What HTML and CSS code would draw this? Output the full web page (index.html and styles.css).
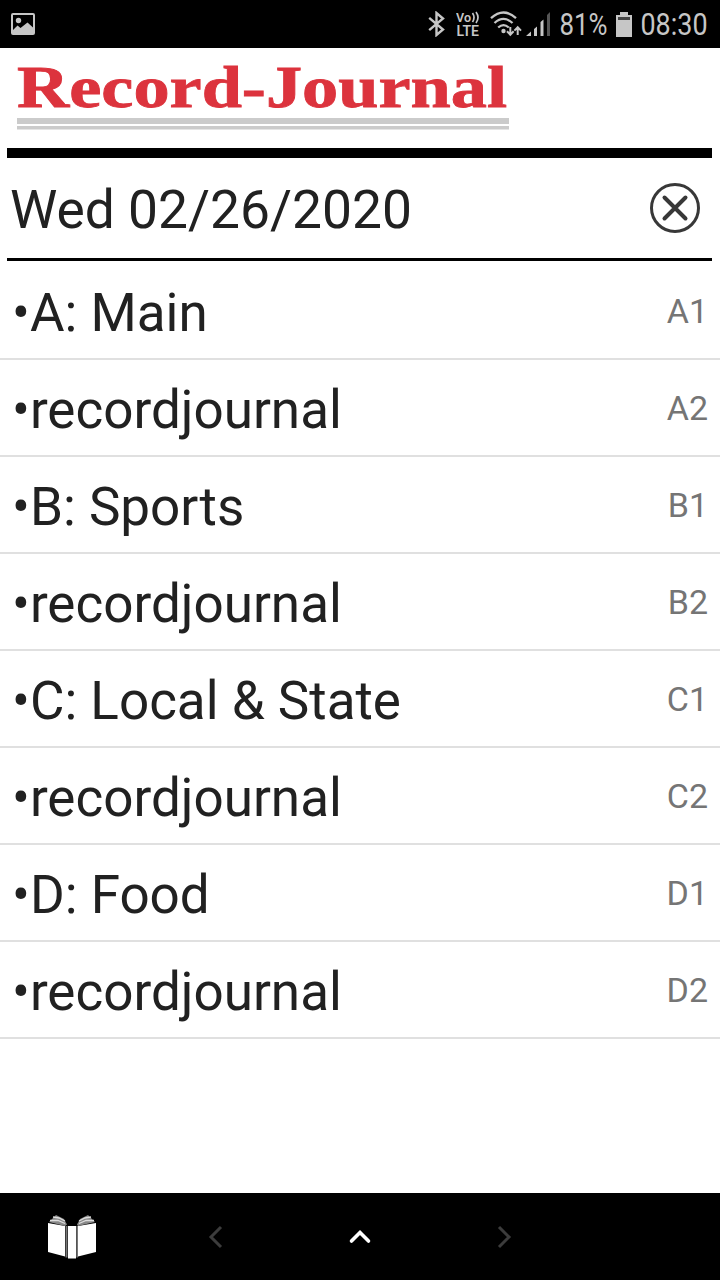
FILE: index.html
```html
<!DOCTYPE html>
<html lang="en">
<head>
    <meta charset="UTF-8">
    <meta name="viewport" content="width=device-width, initial-scale=1.0">
    <title>Record-Journal</title>
    <link rel="stylesheet" href="styles.css">
</head>
<body>
    <div class="status-bar">
        <svg class="icon-photo" width="24" height="22" viewBox="0 0 24 22">
            <path fill="#c6c6c6" fill-rule="evenodd" d="M2 0H22Q24 0 24 2V20Q24 22 22 22H2Q0 22 0 20V2Q0 0 2 0ZM2 2V17L6.500 12.500L9.500 15L16.500 9.500L22 14.500V2Z"/>
            <circle cx="7.500" cy="7.500" r="2.700" fill="#c6c6c6"/>
        </svg>
        <svg width="17" height="26" viewBox="0 0 17 26">
            <path fill="none" stroke="#c6c6c6" stroke-width="2.400" d="M1.200 6.800L15 18.500L8.500 24V2L15 7.500L1.200 19.200"/>
        </svg>
        <svg class="icon-volte" width="24" height="26" viewBox="0 0 24 26">
            <text x="0" y="11" font-size="13" textLength="15" lengthAdjust="spacingAndGlyphs">Vo</text>
            <path fill="none" stroke="#c6c6c6" stroke-width="1.700" d="M16.500 2Q19.500 6.500 16.500 11M20 1Q24 6.500 20 12"/>
            <text x="0.500" y="24.500" font-size="14" textLength="22.500" lengthAdjust="spacingAndGlyphs">LTE</text>
        </svg>
        <svg class="icon-wifi" width="32" height="26" viewBox="0 0 32 26">
            <g fill="none" stroke="#c6c6c6" stroke-width="2.300">
                <path d="M1 7.200Q13.500 -4.200 26 7.200M4.500 12Q13.500 3.800 22.500 12M8.200 16.500Q13.500 11.800 18.800 16.500"/>
                <path stroke-width="2" d="M20.300 16V24M17 20.300L20.300 23.700L23.600 20.300M27.700 24V16.300M24.400 19.600L27.700 16.200L31 19.600"/>
            </g>
            <circle cx="13.500" cy="20" r="2.200" fill="#c6c6c6"/>
        </svg>
        <svg class="icon-signal" width="24" height="24" viewBox="0 0 24 24">
            <path fill="#c6c6c6" d="M0 24L5 19.500V24ZM8 17L11 14.500V24H8ZM14.500 10L17.500 7.500V24H14.500Z"/>
            <path fill="#555" d="M21 3L24 0V24H21Z"/>
        </svg>
        <svg class="battery-level" width="49" height="40" viewBox="0 0 49 40">
            <text x="0.500" y="31" font-size="31" textLength="48" lengthAdjust="spacingAndGlyphs">81%</text>
        </svg>
        <svg class="icon-battery" width="16" height="25" viewBox="0 0 16 25">
            <path fill="#c6c6c6" d="M4 0H12V3H16V25H0V3H4Z"/>
            <path fill="#444" d="M2 5H14V8H2Z"/>
        </svg>
        <svg class="clock" width="68" height="40" viewBox="0 0 68 40">
            <text x="0.500" y="31" font-size="31" textLength="67" lengthAdjust="spacingAndGlyphs">08:30</text>
        </svg>
    </div>

    <header class="masthead">
        <svg class="logo" width="494" height="82" viewBox="0 -10 494 82">
            <text class="logo-text" x="1" y="48.500" font-size="59" textLength="490" lengthAdjust="spacingAndGlyphs">Record-Journal</text>
            <path fill="#cbcbcb" d="M1 60H493V66H1ZM1 68H493V71.500H1Z"/>
        </svg>
    </header>

    <div class="date-bar">
        <h1 class="date">Wed 02/26/2020</h1>
        <svg class="close" width="50" height="50" viewBox="0 0 50 50">
            <g fill="none" stroke="#383838">
                <circle cx="25" cy="25" r="23.500" stroke-width="3"/>
                <path stroke-width="4" stroke-linecap="round" d="M14.500 14.500L35.500 35.500M35.500 14.500L14.500 35.500"/>
            </g>
        </svg>
    </div>

    <ul class="sections">
        <li><span class="name">•A: Main</span><span class="page">A1</span></li>
        <li><span class="name">•recordjournal</span><span class="page">A2</span></li>
        <li><span class="name">•B: Sports</span><span class="page">B1</span></li>
        <li><span class="name">•recordjournal</span><span class="page">B2</span></li>
        <li><span class="name">•C: Local &amp; State</span><span class="page">C1</span></li>
        <li><span class="name">•recordjournal</span><span class="page">C2</span></li>
        <li><span class="name">•D: Food</span><span class="page">D1</span></li>
        <li><span class="name">•recordjournal</span><span class="page">D2</span></li>
    </ul>

    <nav class="bottom-nav">
        <div class="nav-item">
            <svg width="50" height="46" viewBox="0 0 50 46">
                <path fill="#fff" d="M1 9L18 12V42.500L1 38ZM49 9L31 12V42.500L49 38ZM21 12H29V44.500H21Z"/>
                <path fill="#777" d="M18.500 12H20.500V43.500H18.500ZM29.300 12H31V43.500H29.300Z"/>
                <path fill="#888" d="M2 8L9 1L17 5L20 10.500L18 12ZM48 8L41 1L33 5L30 10.500L31 12Z"/>
                <g fill="none" stroke="#ddd" stroke-width="1.300">
                    <path d="M3 6.500L11 6.500L18 9.500M6 3L12 4L18 7"/>
                    <path d="M47 6.500L39 6.500L32 9.500M44 3L38 4L32 7"/>
                </g>
            </svg>
        </div>
        <div class="nav-item">
            <svg width="24" height="24" viewBox="0 0 24 24"><path fill="none" stroke="#3c3c3c" stroke-width="3" d="M17 2L7 12L17 22"/></svg>
        </div>
        <div class="nav-item">
            <svg width="24" height="24" viewBox="0 0 24 24"><path fill="none" stroke="#fff" stroke-width="3.600" stroke-linecap="round" d="M3.500 16L12 7.500L20.500 16"/></svg>
        </div>
        <div class="nav-item">
            <svg width="24" height="24" viewBox="0 0 24 24"><path fill="none" stroke="#3c3c3c" stroke-width="3" d="M7 2L17 12L7 22"/></svg>
        </div>
        <div class="nav-item"></div>
    </nav>
</body>
</html>
```
FILE: styles.css
```css
* {
    box-sizing: border-box;
}
body {
    font-family: Roboto, sans-serif;
    background-color: #fff;
    color: #212121;
    margin: 0;
    height: 1280px;
    display: flex;
    flex-direction: column;
    overflow: hidden;
}
svg {
    display: block;
    flex: none;
}

/* Phone status bar */
.status-bar {
    height: 48px;
    flex: none;
    background-color: #000;
    display: flex;
    align-items: center;
    padding: 0 12px 0 11px;
}
.status-bar text {
    fill: #c6c6c6;
}
.icon-photo {
    margin-right: auto;
}
.icon-volte {
    margin-left: 11px;
    font-weight: 600;
}
.icon-wifi {
    margin-left: 10px;
}
.icon-signal {
    margin-left: 4px;
}
.battery-level {
    margin-left: 9px;
}
.icon-battery {
    margin-left: 8px;
}
.clock {
    margin-left: 8px;
}

.masthead {
    height: 110px;
    flex: none;
    margin: 0 8px 0 7px;
    padding: 0 0 0 9px;
    border-bottom: 10px solid #000;
}
.logo-text {
    font-family: "Liberation Serif", serif;
    font-weight: bold;
    fill: #dc333d;
    stroke: #dc333d;
    stroke-width: 0.8px;
}

.date-bar {
    height: 103px;
    flex: none;
    margin: 0 8px 0 7px;
    padding: 0 12px 0 3px;
    border-bottom: 3px solid #000;
    display: flex;
    align-items: center;
    justify-content: space-between;
}
.date {
    font-size: 53.33px;
    font-weight: 400;
    margin: 3px 0 0;
}

/* Section list */
.sections {
    list-style: none;
    margin: 0;
    padding: 0;
    flex: 1;
}
.sections li {
    height: 97px;
    padding: 0 12px;
    border-bottom: 2px solid #e0e0e0;
    display: flex;
    align-items: center;
    justify-content: space-between;
}
.sections li:first-child {
    height: 99px;
    padding-top: 2px;
}
.name {
    font-size: 53px;
    padding-top: 5px;
}
.page {
    font-size: 34px;
    color: #757575;
}

.bottom-nav {
    height: 87px;
    flex: none;
    background-color: #000;
    display: flex;
}
.nav-item {
    width: 20%;
    display: flex;
    align-items: center;
    justify-content: center;
}
```
